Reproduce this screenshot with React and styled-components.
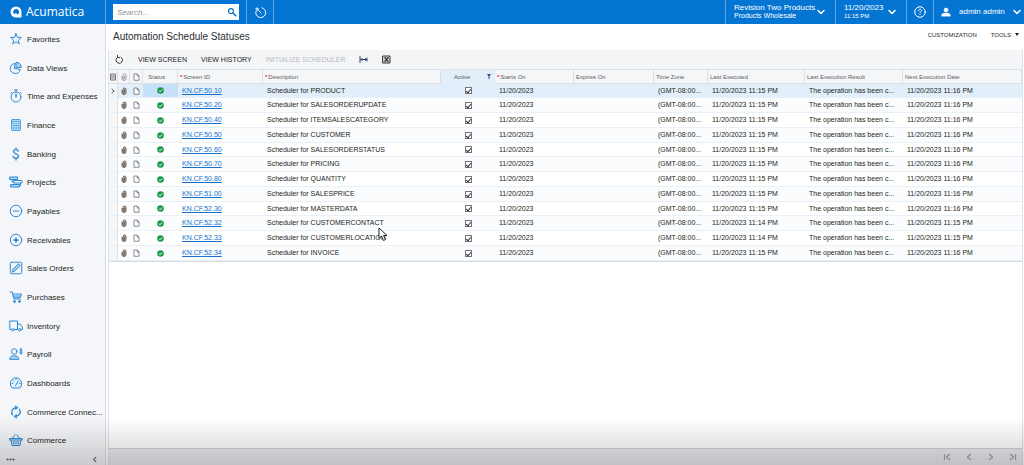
import React from "react";
import styled, { createGlobalStyle, css } from "styled-components";

const Global = createGlobalStyle`
  * { box-sizing: border-box; }
  body {
    margin: 0;
    font-family: "Liberation Sans", Arial, sans-serif;
    font-size: 7px;
    color: #1d1f22;
    background: #fff;
  }
  button, input { font: inherit; color: inherit; }
`;

const Page = styled.div`
  position: relative;
  min-height: 100vh;
  display: flex;
  flex-direction: column;
`;

const BottomShade = styled.div`
  position: absolute;
  left: 0;
  right: 0;
  bottom: 0;
  height: 48px;
  background: linear-gradient(rgba(0, 0, 0, 0), rgba(0, 0, 0, 0.18));
  pointer-events: none;
`;

/* ---------- top bar ---------- */
const TopBar = styled.header`
  display: flex;
  height: 24px;
  background: #0575d4;
  color: #fff;
`;

const Brand = styled.a`
  display: flex;
  align-items: center;
  gap: 4px;
  width: 106px;
  padding-left: 10px;
  border-right: 1px solid #5aa8e8;
  color: #fff;
  text-decoration: none;
  font-family: "Open Sans", sans-serif;
  font-size: 12px;
  font-weight: 500;
  line-height: 22px;
`;

const Search = styled.label`
  display: flex;
  align-items: center;
  width: 126px;
  height: 16px;
  margin: 4px 7px;
  padding-right: 2px;
  background: #fff;
`;

const SearchInput = styled.input`
  flex: 1;
  min-width: 0;
  padding: 0 4px;
  border: 0;
  outline: 0;
  background: transparent;
  color: #333;
  font-size: 8px;
  &::placeholder { color: #8d9094; font-style: italic; opacity: 1; }
`;

const Spacer = styled.div`
  flex: 1;
`;

const TopButton = styled.button`
  display: flex;
  align-items: center;
  justify-content: ${(p) => (p.$spread ? "space-between" : "center")};
  width: ${(p) => p.$width}px;
  padding: ${(p) => (p.$spread ? "0 10px 0 8px" : "0")};
  border: 0;
  border-left: 1px solid #5aa8e8;
  border-right: ${(p) => (p.$closed ? "1px solid #5aa8e8" : "0")};
  background: transparent;
  color: #fff;
  font-size: 8px;
  line-height: 8px;
  text-align: left;
  white-space: nowrap;
`;

const UserButton = styled(TopButton)`
  justify-content: flex-start;
  gap: 8px;
  padding: 0 0 0 7px;
`;

const Small = styled.span`
  display: block;
  font-size: ${(p) => p.$size}px;
`;

/* ---------- side bar ---------- */
const Body = styled.div`
  flex: 1;
  display: flex;
`;

const SideBar = styled.aside`
  display: flex;
  flex-direction: column;
  justify-content: space-between;
  width: 106px;
  flex-shrink: 0;
  background: #f4f6f9;
  border-right: 1px solid #d9dce1;
`;

const Menu = styled.nav`
  display: flex;
  flex-direction: column;
`;

const MenuLink = styled.a`
  display: flex;
  align-items: center;
  gap: 4px;
  height: 29px;
  padding-left: 9px;
  color: #1d1f22;
  text-decoration: none;
  font-size: 8px;
  white-space: nowrap;
  &:nth-child(3n) { height: 28px; }
  svg { flex-shrink: 0; }
`;

const MenuText = styled.span`
  line-height: 12px;
  padding-top: 2px;
`;

const SideFooter = styled.div`
  display: flex;
  align-items: center;
  justify-content: space-between;
  height: 11px;
  padding: 0 7px 0 6px;
`;

const IconButton = styled.button`
  display: flex;
  align-items: center;
  justify-content: center;
  padding: 0;
  border: 0;
  background: transparent;
  color: ${(p) => p.$color || "#333"};
`;

/* ---------- main ---------- */
const Main = styled.main`
  position: relative;
  flex: 1;
  min-width: 0;
  display: flex;
  flex-direction: column;
  padding: 0 1px 0 2px;
`;

const TitleBar = styled.div`
  display: flex;
  justify-content: space-between;
  height: 26px;
  padding: 0 4px 0 5px;
`;

const Title = styled.h1`
  margin: 0;
  font-size: 10px;
  font-weight: 400;
  line-height: 26px;
  color: #2b2e33;
`;

const TitleActions = styled.div`
  display: flex;
  gap: 14px;
  height: 21px;
`;

const TitleButton = styled.button`
  display: flex;
  align-items: center;
  gap: 4px;
  padding: 0;
  border: 0;
  background: transparent;
  font-size: 6px;
`;

const Panel = styled.section`
  flex: 1;
  display: flex;
  flex-direction: column;
  border: solid #dfe2e6;
  border-width: 0 1px;
`;

const ToolBar = styled.div`
  display: flex;
  align-items: center;
  gap: 14px;
  height: 19px;
  padding: 0 0 1px 6px;
  background: #f4f5f7;
`;

const ToolButton = styled.button`
  padding: 0;
  border: 0;
  background: transparent;
  font-size: 7px;
  color: #222;
  &:disabled { color: #b9bcc0; }
`;

const Grid = styled.table`
  width: 100%;
  table-layout: fixed;
  border-collapse: separate;
  border-spacing: 0;
  border-bottom: 1px solid #d5d9de;
`;

const Col = styled.col`
  width: ${(p) => (p.$width ? p.$width + "px" : "auto")};
`;

const Head = styled.th`
  height: 15px;
  padding: 0 0 0 ${(p) => (p.$center ? 0 : 2)}px;
  border: solid #dcdfe4;
  border-width: 1px 1px 1px 0;
  background: ${(p) => (p.$active ? "#e2effa" : "#f5f6f8")};
  color: #5a5d62;
  font-size: 6px;
  font-weight: 400;
  line-height: 8px;
  text-align: ${(p) => (p.$center ? "center" : "left")};
  white-space: nowrap;
  ${(p) => p.$active && css`border-color: #e2effa; border-top-color: #dcdfe4;`}
  ${(p) => p.$center && css`svg { display: block; margin: 0 auto; }`}
`;

const Required = styled.span`
  color: #e0301e;
  font-weight: 700;
  margin-right: 1px;
`;

const HeadSplit = styled.span`
  display: flex;
  align-items: center;
  justify-content: space-between;
  padding: 0 3px 0 11px;
`;

const Cell = styled.td`
  padding: 0 0 0 4px;
  border-bottom: 1px solid #e8f1f8;
  font-size: 7px;
  line-height: 8px;
  white-space: nowrap;
  ${(p) => p.$tight && css`padding: 0;`}
  ${(p) => p.$mark && css`background: #f4f6f8; border-right: 1px solid #dfe3e8;`}
  svg { display: block; margin: 0 auto; }
`;

const Row = styled.tr`
  height: 15px;
  background: #fff;
  &:nth-child(4n + 1) { height: 14px; }
  &:nth-child(even) { background: #fafcfe; }
  ${(p) => p.$selected && css`
    background: #e2effa;
    ${Cell}:nth-child(4) { background: #c6e0f7; }
  `}
`;

const ScreenLink = styled.a`
  color: #1672cc;
  text-decoration: underline;
`;

const Check = styled.input`
  appearance: none;
  position: relative;
  display: block;
  width: 7px;
  height: 7px;
  margin: 0 auto;
  border: 1px solid #77727c;
  background: #fff;
  &:checked::after {
    content: "";
    position: absolute;
    left: 1px;
    top: 0;
    width: 2px;
    height: 4px;
    border: solid #333;
    border-width: 0 1px 1px 0;
    transform: rotate(40deg);
  }
`;

const Pager = styled.footer`
  display: flex;
  align-items: center;
  justify-content: flex-end;
  gap: 14px;
  height: 17px;
  margin-top: auto;
  padding-right: 5px;
  border-top: 1px solid #d0d3d6;
  background: #e9ebee;
`;

const Pointer = styled.svg`
  position: absolute;
  left: 272px;
  top: 203px;
  pointer-events: none;
`;

/* ---------- drawings ---------- */
const Icon = ({ size = 14, box = 28, color = "currentColor", w = 2, children }) => (
  <svg width={size} height={size} viewBox={`0 0 ${box} ${box}`} fill="none" stroke={color}
    strokeWidth={w} strokeLinecap="round" strokeLinejoin="round" aria-hidden="true">
    {children}
  </svg>
);

const BLUE = "#2f8ad6";
const PALE = "#a9d3f3";

const shapes = {
  star: <path d="M14 3.500l3 7 7.500.7-5.700 5 1.700 7.500-6.500-4-6.500 4 1.700-7.500-5.700-5 7.500-.7z" />,
  pie: <><path d="M11.500 5A10 10 0 1 0 22.500 17l-11-2z" /><path d="M15 2.500a9.500 9.500 0 0 1 9.500 10L15 13.500z" fill={PALE} /></>,
  timer: <><circle cx="14" cy="16" r="10" /><path d="M11 2h6M14 2v4M22.500 6.500l2 2M5.500 6.500l-2 2" /><path d="M14 16V11" strokeWidth="3" /></>,
  calc: <><rect x="5" y="3" width="18" height="22" rx="2" fill={PALE} strokeWidth="1.500" /><path d="M8 7h12v3H8z" fill="#fff" strokeWidth="1.200" /><path d="M9 15h1M14 15h1M19 15h.5M9 20h1M14 20h1M19 20h.5" /></>,
  dollar: <path d="M18.500 8.500c-.5-2.500-2.300-3.300-4.700-3.300-2.800 0-4.800 1.500-4.800 4 0 5.500 10 3.200 10 8.800 0 2.800-2.200 4.500-5.200 4.500s-5.200-1.500-5.500-4.200M14 2v3M14 23v3" strokeWidth="2.600" />,
  projects: <><rect x="2" y="4" width="15" height="5" fill={PALE} /><rect x="10" y="11" width="16" height="5" fill="#fff" /><rect x="4" y="19" width="17" height="5" fill={PALE} /><path d="M6 9v4.500h4M23 16v5h-2" /></>,
  minus: <><circle cx="14" cy="14" r="11.500" /><path d="M8.500 14h11" /></>,
  plus: <><circle cx="14" cy="14" r="11.500" /><path d="M10.500 14h7M14 10.500v7" strokeWidth="3.500" /></>,
  edit: <><rect x="2.500" y="2.500" width="23" height="23" rx="2.500" /><path d="M6.500 21.500l1.500-5L19 5.500l3.500 3.500L11.500 20z" fill={PALE} /></>,
  cart: <><path d="M2 4h4.500l3.500 14h13M7.500 8H25l-2.500 7-13.500 1M8 12h15" /><circle cx="11" cy="23" r="2" fill={BLUE} /><circle cx="21" cy="23" r="2" fill={BLUE} /></>,
  truck: <><path d="M4 21H1.500V4H17v17h-6.500M17 10h5l4.500 5.500V21h-2M17 21h1.500" /><circle cx="7.500" cy="21.500" r="2.500" fill="#fff" /><circle cx="21.500" cy="21.500" r="2.500" fill="#fff" /></>,
  payroll: <><circle cx="10.500" cy="9" r="5.500" /><path d="M1.500 24c0-5 4-6.500 9-6.500s9 1.500 9 6.500z" fill={PALE} /><path d="M26.500 6c-1-2-5-2-5 .3 0 2.700 5.200 1.700 5.200 4.500 0 2.500-4.700 2.500-5.500.2M24 2v13" /></>,
  gauge: <><path d="M6 23.500a11.500 11.500 0 1 1 16 0z" fill="#e3f1fc" /><path d="M13 19l6-9M6 15h1.500M8.500 9l1 1M14 6v1.500M21 15h1.500" /></>,
  sync: <><path d="M7 19.500A9 9 0 0 1 14 5.500M21 8.500A9 9 0 0 1 14 22.500" strokeWidth="2.600" /><path d="M13 1.500v8l5-4zM15 26.500v-8l-5 4z" fill={BLUE} strokeWidth="1" /></>,
  basket: <><path d="M1.500 11h25v3h-25zM4 14.500l2 10.500h16l2-10.500M7 10.500l5-7M21 10.500l-5-7" fill="#d4e9f9" /><path d="M9.500 17v5M14 17v5M18.500 17v5" /></>,
};

const menu = [
  ["star", "Favorites"], ["pie", "Data Views"], ["timer", "Time and Expenses"],
  ["calc", "Finance"], ["dollar", "Banking"], ["projects", "Projects"],
  ["minus", "Payables"], ["plus", "Receivables"], ["edit", "Sales Orders"],
  ["cart", "Purchases"], ["truck", "Inventory"], ["payroll", "Payroll"],
  ["gauge", "Dashboards"], ["sync", "Commerce Connec..."], ["basket", "Commerce"],
];

const rows = [
  ["50.10", "PRODUCT", "15", "16"], ["50.20", "SALESORDERUPDATE", "15", "16"],
  ["50.40", "ITEMSALESCATEGORY", "15", "16"], ["50.50", "CUSTOMER", "15", "16"],
  ["50.60", "SALESORDERSTATUS", "15", "16"], ["50.70", "PRICING", "15", "16"],
  ["50.80", "QUANTITY", "15", "16"], ["51.00", "SALESPRICE", "15", "16"],
  ["52.30", "MASTERDATA", "15", "16"], ["52.32", "CUSTOMERCONTACT", "14", "15"],
  ["52.33", "CUSTOMERLOCATION", "14", "15"], ["52.34", "INVOICE", "15", "16"],
];

const widths = [9, 12, 13, 35, 85, 178, 54, 79, 80, 54, 97, 98, null];

const Chevron = () => (
  <Icon size={8} box={16} w={3}><path d="M2 5l6 6 6-6" /></Icon>
);

const Clip = ({ color, fill }) => (
  <svg width="6" height="8" viewBox="0 0 12 16" fill="none" stroke={color} strokeWidth="2" aria-hidden="true">
    <path d="M2 6v5a4 4 0 0 0 8 0V5a3 3 0 0 0-6 0v6a1.500 1.500 0 0 0 3 0V6" fill={fill} />
  </svg>
);

const Doc = () => (
  <svg width="7" height="8" viewBox="0 0 14 16" fill="#fff" stroke="#6b6f75" strokeWidth="1.600" aria-hidden="true">
    <path d="M2 2h6.500L12 6v8.500H2zM8.500 2v4H12" />
  </svg>
);

const StatusMark = () => (
  <svg width="7" height="7" viewBox="0 0 14 14" role="img" aria-label="OK">
    <circle cx="7" cy="7" r="6.600" fill="#189a4a" />
    <path d="M3.800 7.200l2.300 2.300 4.200-4.500" fill="none" stroke="#fff" strokeWidth="2" />
  </svg>
);

const pagerPaths = [
  ["First page", "M3 3v10M13 3L7 8l6 5"],
  ["Previous page", "M11 3L5 8l6 5"],
  ["Next page", "M5 3l6 5-6 5"],
  ["Last page", "M13 3v10M3 3l6 5-6 5"],
];

export default function App() {
  return (
    <Page>
      <Global />
      <TopBar>
        <Brand href="#home">
          <svg width="12" height="12" viewBox="0 0 24 24" aria-hidden="true">
            <path d="M12 1a11 11 0 0 1 11 11v11H12a11 11 0 0 1 0-22z" fill="#fff" />
            <path d="M12 6a6 6 0 0 1 6 6c0 3-1 4.500-3 5.500 0-2-1-3-3-3.200-2 0-3 1-3.500 2.300A6 6 0 0 1 12 6z" fill="#0575d4" />
          </svg>
          Acumatica
        </Brand>
        <Search>
          <SearchInput type="text" placeholder="Search..." aria-label="Search" />
          <Icon size={10} box={20} color="#1878d0" w={2.5}><circle cx="8" cy="8" r="5" /><path d="M12 12l5.500 5.500" strokeWidth="3.500" /></Icon>
        </Search>
        <TopButton $width={28} $closed aria-label="Recent">
          <Icon size={13} box={26} w={2}><path d="M7 5.500a10 10 0 1 0 9-2M14 14L9 9M3.500 4.500H8V9" /></Icon>
        </TopButton>
        <Spacer />
        <TopButton $width={110} $spread>
          <span>Revision Two Products<Small $size={7}>Products Wholesale</Small></span>
          <Chevron />
        </TopButton>
        <TopButton $width={71} $spread>
          <span>11/20/2023<Small $size={6}>11:15 PM</Small></span>
          <Chevron />
        </TopButton>
        <TopButton $width={27} aria-label="Help">
          <Icon size={12} box={24} w={2}><circle cx="12" cy="12" r="10.500" /><path d="M9 9.500c0-4 6-4 6-.3 0 2.300-3 2.300-3 4.600M12 17v.3" /></Icon>
        </TopButton>
        <UserButton $width={91}>
          <Icon size={10} box={20} w={1}><circle cx="10" cy="6" r="4" fill="#fff" /><path d="M1.500 18v-2.500C1.500 13 6 12 10 12s8.500 1 8.500 3.500V18z" fill="#fff" /></Icon>
          <span>admin admin</span>
          <Chevron />
        </UserButton>
      </TopBar>

      <Body>
        <SideBar>
          <Menu aria-label="Workspaces">
            {menu.map(([icon, label]) => (
              <MenuLink href="#workspace" key={label}>
                <Icon color={BLUE}>{shapes[icon]}</Icon>
                <MenuText>{label}</MenuText>
              </MenuLink>
            ))}
          </Menu>
          <SideFooter>
            <IconButton aria-label="More items" $color="#666">
              <svg width="9" height="3" viewBox="0 0 9 3" fill="currentColor"><circle cx="1.500" cy="1.500" r="1.100" /><circle cx="4.500" cy="1.500" r="1.100" /><circle cx="7.500" cy="1.500" r="1.100" /></svg>
            </IconButton>
            <IconButton aria-label="Collapse menu" $color="#666"><Icon size={7} box={16} w={2.5}><path d="M11 3L6 8l5 5" /></Icon></IconButton>
          </SideFooter>
        </SideBar>

        <Main>
          <TitleBar>
            <Title>Automation Schedule Statuses</Title>
            <TitleActions>
              <TitleButton>CUSTOMIZATION</TitleButton>
              <TitleButton>TOOLS <svg width="4" height="3" viewBox="0 0 4 3"><path d="M0 0h4L2 3z" fill="#222" /></svg></TitleButton>
            </TitleActions>
          </TitleBar>

          <Panel>
            <ToolBar>
              <IconButton aria-label="Refresh">
                <Icon size={9} box={18} w={2}><path d="M5 4.500a6.500 6.500 0 1 0 7 0M5 1v4h4" /></Icon>
              </IconButton>
              <ToolButton>VIEW SCREEN</ToolButton>
              <ToolButton>VIEW HISTORY</ToolButton>
              <ToolButton disabled>INITIALIZE SCHEDULER</ToolButton>
              <IconButton aria-label="Fit to screen" $color="#2f4468">
                <Icon size={9} box={18} w={2}><path d="M2 3v12M16 6v6M3 9h12M6 7v4M13 7v4" /></Icon>
              </IconButton>
              <IconButton aria-label="Export to Excel">
                <Icon size={9} box={18} w={2}><rect x="2" y="2" width="14" height="14" fill="#d8d8d8" /><path d="M6 5.500l6 7M12 5.500l-6 7" strokeWidth="2.800" /></Icon>
              </IconButton>
            </ToolBar>

            <Grid>
              <colgroup>{widths.map((w, i) => <Col key={i} $width={w} />)}</colgroup>
              <thead>
                <tr>
                  <Head $center aria-label="Row settings">
                    <svg width="6" height="8" viewBox="0 0 12 16" fill="none" stroke="#777" strokeWidth="2"><path d="M1 2h10v12H1zM1 6h10M1 10h10" /></svg>
                  </Head>
                  <Head $center aria-label="Files"><Clip color="#9a9da2" fill="none" /></Head>
                  <Head $center aria-label="Notes"><Doc /></Head>
                  <Head>&nbsp;&nbsp;Status</Head>
                  <Head><Required>*</Required>Screen ID</Head>
                  <Head><Required>*</Required>Description</Head>
                  <Head $active>
                    <HeadSplit>Active
                      <svg width="4" height="5" viewBox="0 0 8 10" aria-label="Filtered"><path d="M0 0h8L5 5v5H3V5z" fill="#35527e" /></svg>
                    </HeadSplit>
                  </Head>
                  <Head><Required>*</Required>Starts On</Head>
                  <Head>Expires On</Head>
                  <Head>Time Zone</Head>
                  <Head>Last Executed</Head>
                  <Head>Last Execution Result</Head>
                  <Head>Next Execution Date</Head>
                </tr>
              </thead>
              <tbody>
                {rows.map(([id, name, last, next], i) => (
                  <Row key={id} $selected={i === 0}>
                    <Cell $tight $mark>
                      {i === 0 && <Icon size={6} box={16} color="#555" w={2.5}><path d="M5 3l6 5-6 5" /></Icon>}
                    </Cell>
                    <Cell $tight><Clip color="#6a6462" fill="#b9a48f" /></Cell>
                    <Cell $tight><Doc /></Cell>
                    <Cell $tight><StatusMark /></Cell>
                    <Cell><ScreenLink href="#screen">KN.CF.{id}</ScreenLink></Cell>
                    <Cell>Scheduler for {name}</Cell>
                    <Cell $tight><Check type="checkbox" defaultChecked aria-label={`Active: ${name}`} /></Cell>
                    <Cell>11/20/2023</Cell>
                    <Cell />
                    <Cell>(GMT-08:00...</Cell>
                    <Cell>11/20/2023 11:{last} PM</Cell>
                    <Cell>The operation has been c...</Cell>
                    <Cell>11/20/2023 11:{next} PM</Cell>
                  </Row>
                ))}
              </tbody>
            </Grid>

            <Pager>
              {pagerPaths.map(([label, d]) => (
                <IconButton key={label} aria-label={label} $color="#9b9ea3">
                  <Icon size={8} box={16} w={2.5}><path d={d} /></Icon>
                </IconButton>
              ))}
            </Pager>
          </Panel>
          <Pointer width="10" height="15" viewBox="0 0 20 30" aria-hidden="true">
            <path d="M2 2v21l5-5 4 9 4-2-4-8h7z" fill="#fff" stroke="#222" strokeWidth="2" />
          </Pointer>
        </Main>
      </Body>
      <BottomShade />
    </Page>
  );
}
